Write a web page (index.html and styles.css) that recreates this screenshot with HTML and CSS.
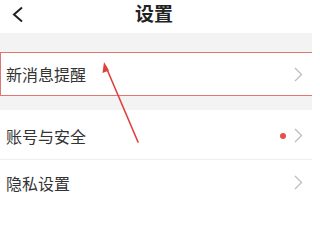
FILE: index.html
```html
<!DOCTYPE html>
<html lang="zh">
<head>
<meta charset="utf-8">
<link rel="stylesheet" href="styles.css">
</head>
<body>
<div class="page">
  <div class="header">
    <div class="back">
      <svg width="14" height="17" viewBox="0 0 14 17"><polyline points="11,1.5 3,8.5 11,15.5" fill="none" stroke="#222" stroke-width="2"/></svg>
    </div>
    <div class="title">设置</div>
    <div></div>
  </div>
  <div class="gap-top"></div>
  <div class="row row-hl">
    <span class="label">新消息提醒</span>
    <svg class="chev" width="9" height="15" viewBox="0 0 9 15"><polyline points="1,1 7.5,7.5 1,14" fill="none" stroke="#bdbdbd" stroke-width="1.3"/></svg>
  </div>
  <div class="gap-mid"></div>
  <div class="row row-div">
    <span class="label">账号与安全</span>
    <span class="dot"></span>
    <svg class="chev" width="9" height="15" viewBox="0 0 9 15"><polyline points="1,1 7.5,7.5 1,14" fill="none" stroke="#bdbdbd" stroke-width="1.3"/></svg>
  </div>
  <div class="row row-last">
    <span class="label">隐私设置</span>
    <svg class="chev" width="9" height="15" viewBox="0 0 9 15"><polyline points="1,1 7.5,7.5 1,14" fill="none" stroke="#bdbdbd" stroke-width="1.3"/></svg>
  </div>
  <svg class="arrow" width="318" height="204" viewBox="0 0 318 204">
    <line x1="106" y1="67" x2="138" y2="142" stroke="#e0403c" stroke-width="1.6" stroke-linecap="round"/>
    <polygon points="104,62 102.5,73 109,70.5" fill="#e0403c"/>
  </svg>
</div>
</body>
</html>
```
FILE: styles.css
```css
html, body {
  margin: 0;
  padding: 0;
  background: #ffffff;
}
.page {
  position: relative;
  width: 312px;
  height: 204px;
  overflow: hidden;
  background: #f3f3f3;
  font-family: "Noto Sans CJK SC", "Noto Sans", sans-serif;
  color: #333333;
}
.header {
  height: 33px;
  background: #ffffff;
  display: grid;
  grid-template-columns: 1fr auto 1fr;
  align-items: center;
}
.back {
  padding-left: 11px;
  display: flex;
  align-items: center;
  margin-top: -4px;
}
.title {
  font-size: 19px;
  line-height: 1;
  font-weight: 700;
  color: #222222;
  margin-top: -9px;
  margin-left: -4px;
}
.gap-top {
  height: 19px;
}
.gap-mid {
  height: 14px;
}
.row {
  background: #ffffff;
  display: flex;
  align-items: center;
  padding: 0 9px 0 6px;
}
.label {
  font-size: 16px;
  flex: 1;
  line-height: 1;
}
.row-hl {
  height: 42px;
  border: 1.5px solid #de7673;
  border-right: none;
  padding-left: 5px;
}
.row-div {
  height: 47px;
  padding-top: 2px;
  border-bottom: 1px solid #eeeeee;
}
.row-last {
  height: 45px;
}
.dot {
  width: 6px;
  height: 6px;
  border-radius: 50%;
  background: #e8504c;
  margin-right: 8px;
}
.chev {
  display: block;
}
.arrow {
  position: absolute;
  left: 0;
  top: 0;
  pointer-events: none;
}
```
